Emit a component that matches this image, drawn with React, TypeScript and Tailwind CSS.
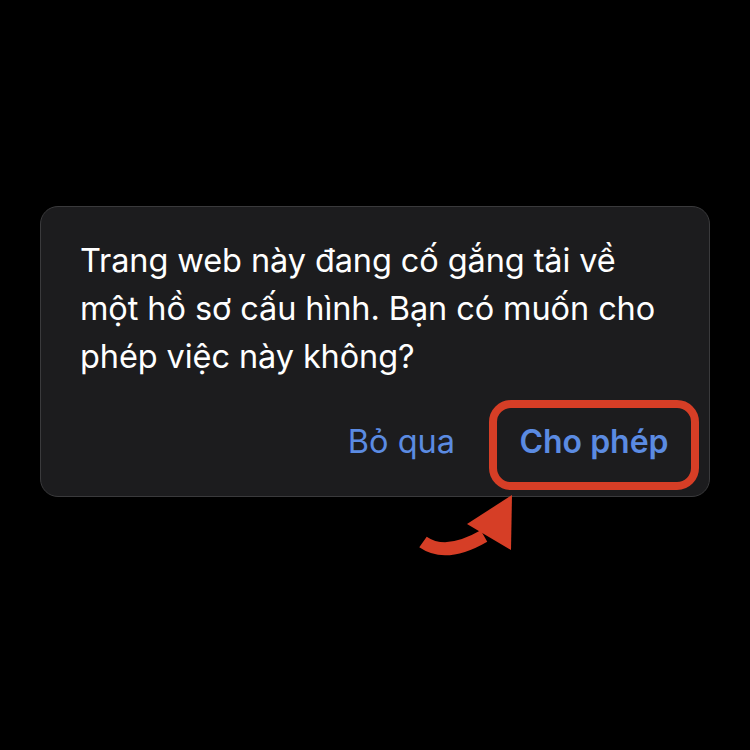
export default function App() {
  return (
    <div className="w-[750px] h-[750px] bg-black pt-[206px] pl-[40px]" style={{ fontFamily: 'Inter, "Noto Sans", sans-serif' }}>
      <div className="relative w-[670px] h-[291px] rounded-[18px] bg-[#1c1c1e] border border-[#3a3a3c] pl-[39px] pr-[10px] pt-[30px]">
        <p className="text-[32.5px] leading-[48px] text-white tracking-[-0.1px]">
          Trang web này đang cố gắng tải về
          <br />
          một hồ sơ cấu hình. Bạn có muốn cho
          <br />
          phép việc này không?
        </p>
        <div className="flex items-center justify-end mt-[19px] gap-[34px]">
          <button className="text-[32.5px] leading-[40px] pb-[6px] text-[#5b8be2]">Bỏ qua</button>
          <button className="text-[32px] leading-[40px] pb-[6px] font-semibold text-[#5b8be2] h-[90px] w-[210px] rounded-[22px] border-[8px] border-[#d63e26] flex items-center justify-center">
            Cho phép
          </button>
        </div>
        <svg className="absolute left-[375px] top-[283px]" width="100" height="70" viewBox="0 0 100 70">
          <path d="M7 52 Q30 68 68 46" fill="none" stroke="#d63e26" strokeWidth="13" />
          <polygon points="96,5 51,34 95,60" fill="#d63e26" />
        </svg>
      </div>
    </div>
  );
}
